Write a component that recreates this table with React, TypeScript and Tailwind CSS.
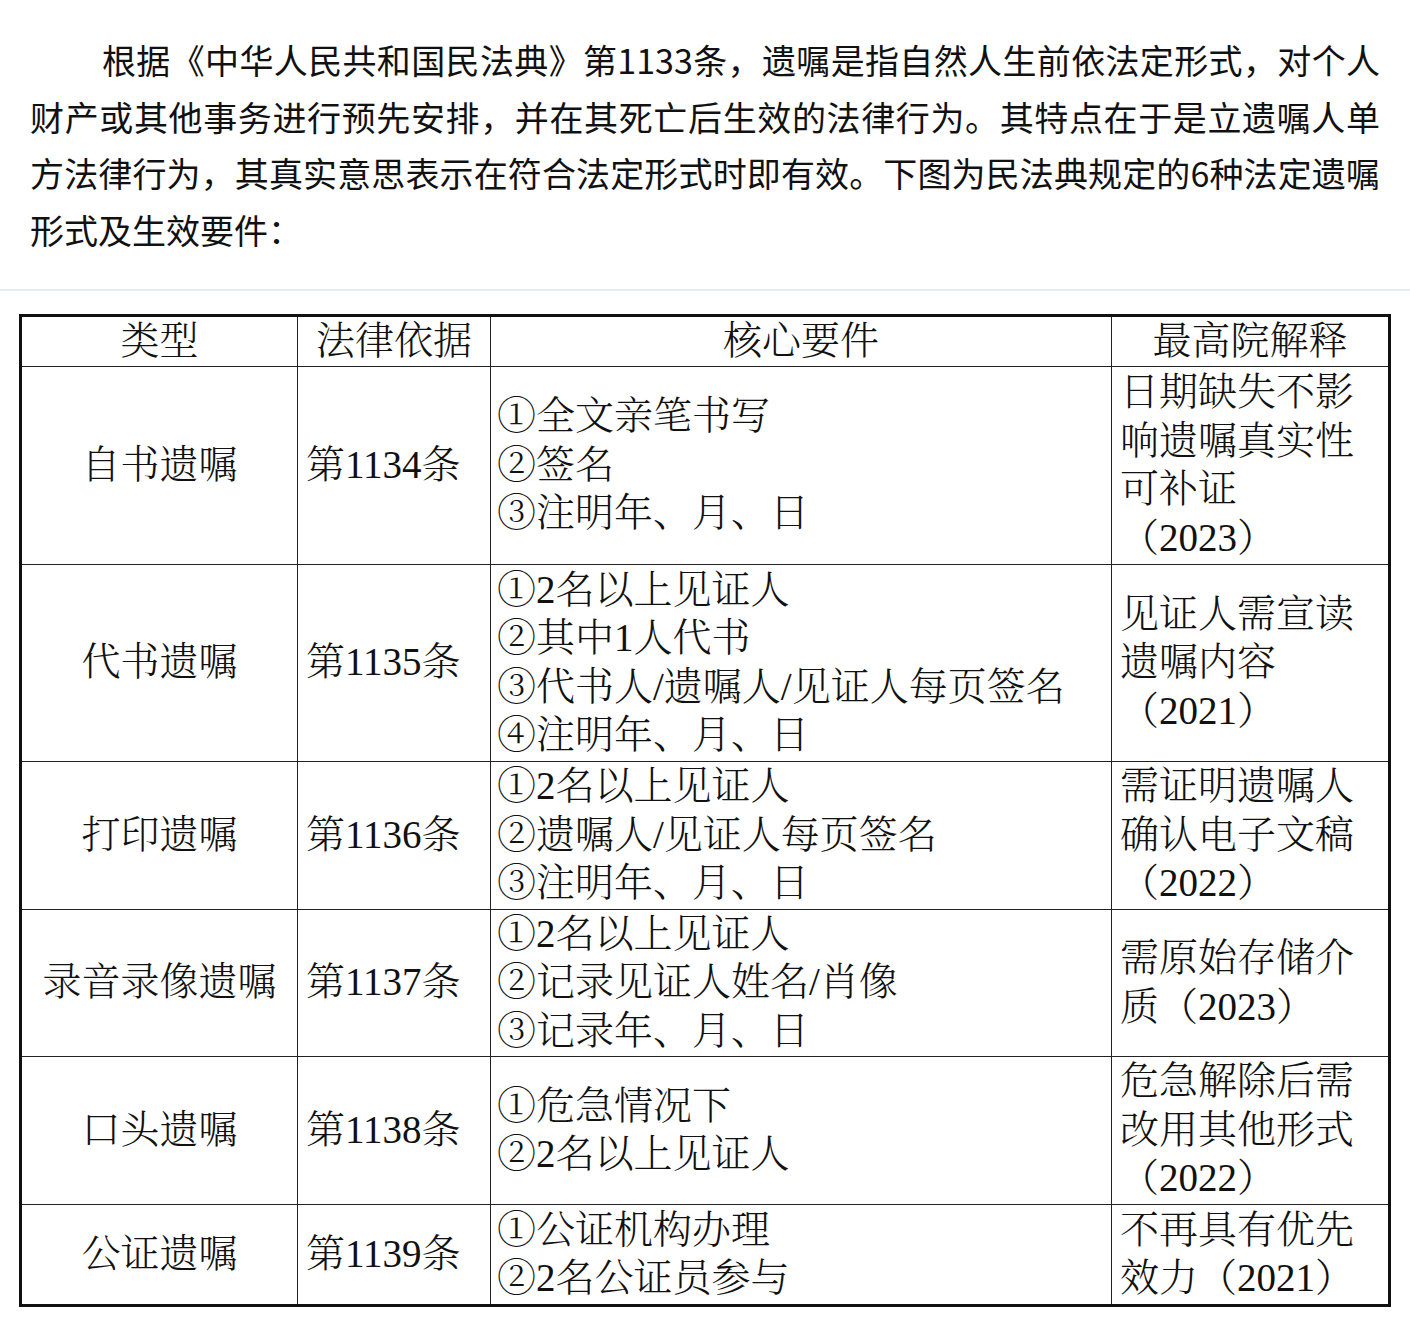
type WillRow = {
  type: string;
  law: string;
  items: string[];
  note: string;
  height: string;
};

const rows: WillRow[] = [
  {
    type: "自书遗嘱",
    law: "第1134条",
    items: ["①全文亲笔书写", "②签名", "③注明年、月、日"],
    note: "日期缺失不影响遗嘱真实性可补证（2023）",
    height: "h-[198px]",
  },
  {
    type: "代书遗嘱",
    law: "第1135条",
    items: ["①2名以上见证人", "②其中1人代书", "③代书人/遗嘱人/见证人每页签名", "④注明年、月、日"],
    note: "见证人需宣读遗嘱内容（2021）",
    height: "h-[197px]",
  },
  {
    type: "打印遗嘱",
    law: "第1136条",
    items: ["①2名以上见证人", "②遗嘱人/见证人每页签名", "③注明年、月、日"],
    note: "需证明遗嘱人确认电子文稿（2022）",
    height: "h-[148px]",
  },
  {
    type: "录音录像遗嘱",
    law: "第1137条",
    items: ["①2名以上见证人", "②记录见证人姓名/肖像", "③记录年、月、日"],
    note: "需原始存储介质（2023）",
    height: "h-[147px]",
  },
  {
    type: "口头遗嘱",
    law: "第1138条",
    items: ["①危急情况下", "②2名以上见证人"],
    note: "危急解除后需改用其他形式（2022）",
    height: "h-[148px]",
  },
  {
    type: "公证遗嘱",
    law: "第1139条",
    items: ["①公证机构办理", "②2名公证员参与"],
    note: "不再具有优先效力（2021）",
    height: "h-[101px]",
  },
];

const lines = [
  "根据《中华人民共和国民法典》第1133条，遗嘱是指自然人生前依法定形式，对个人",
  "财产或其他事务进行预先安排，并在其死亡后生效的法律行为。其特点在于是立遗嘱人单",
  "方法律行为，其真实意思表示在符合法定形式时即有效。下图为民法典规定的6种法定遗嘱",
];

export default function App() {
  return (
    <div className="min-h-screen bg-white text-[#111]">
      <p className="px-[30px] pt-[32px] pb-[31px] font-['Noto_Sans_CJK_SC',sans-serif] text-[34px] leading-[56.5px]">
        {lines.map((line, i) => (
          <span
            key={i}
            className={
              i === 0
                ? "block pl-[72px] text-justify [text-align-last:justify]"
                : "block text-justify [text-align-last:justify]"
            }
          >
            {line}
          </span>
        ))}
        <span className="block">形式及生效要件：</span>
      </p>

      <div className="border-t-2 border-b-[3px] border-t-[#e2ebf6] border-b-[#cfe4f5] pt-[23px] pb-[24px]">
        <table className="ml-[19px] w-[1369px] table-fixed border-collapse border-[3px] border-[#111] font-['Liberation_Serif','Noto_Serif_CJK_SC','Noto_Sans_CJK_SC',serif] text-[39px] font-light leading-[48.5px] [text-spacing-trim:space-all]">
          <colgroup>
            <col className="w-[277px]" />
            <col className="w-[193px]" />
            <col className="w-[621px]" />
            <col className="w-[278px]" />
          </colgroup>
          <thead>
            <tr className="h-[48px]">
              <th className="border-[1.5px] border-[#222] p-0 text-center font-light">类型</th>
              <th className="border-[1.5px] border-[#222] p-0 text-center font-light">法律依据</th>
              <th className="border-[1.5px] border-[#222] p-0 text-center font-light">核心要件</th>
              <th className="border-[1.5px] border-[#222] p-0 text-center font-light">最高院解释</th>
            </tr>
          </thead>
          <tbody>
            {rows.map((row) => (
              <tr key={row.type} className={row.height}>
                <td className="border-[1.5px] border-[#222] p-0 text-center align-middle whitespace-nowrap">
                  {row.type}
                </td>
                <td className="border-[1.5px] border-[#222] py-0 pl-[8px] pr-0 align-middle whitespace-nowrap">
                  {row.law}
                </td>
                <td className="border-[1.5px] border-[#222] py-0 pl-[6px] pr-0 align-middle">
                  {row.items.map((item) => (
                    <div key={item} className="whitespace-nowrap">
                      {item}
                    </div>
                  ))}
                </td>
                <td className="border-[1.5px] border-[#222] py-0 pl-[8px] pr-[10px] align-middle">
                  {row.note}
                </td>
              </tr>
            ))}
          </tbody>
        </table>
      </div>
    </div>
  );
}
